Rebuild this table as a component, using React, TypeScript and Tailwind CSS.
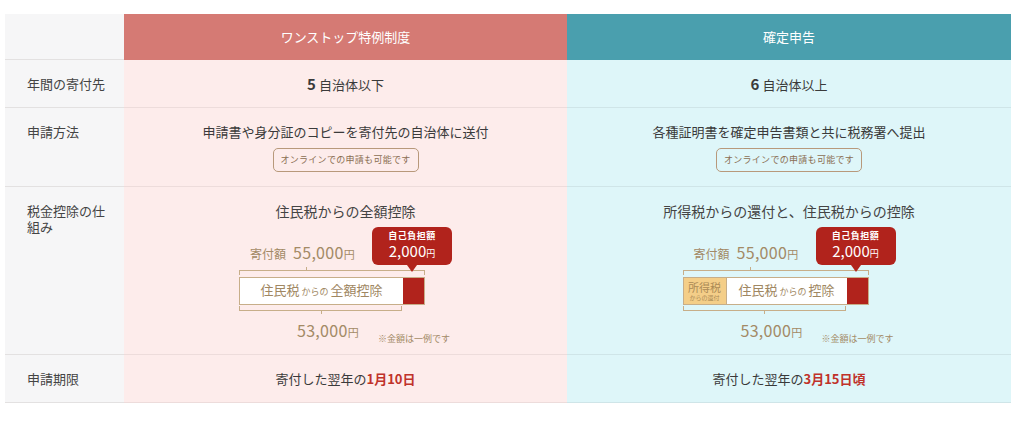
import React from "react";

const TAN = "border-[#c7ae89]";

function Chart({ blue }: { blue?: boolean }) {
  return (
    <div className="w-[213px] mt-[8px] text-[#a38a66]">
      <div className="flex items-end justify-between h-[38px]">
        <div className="pl-[11px] flex items-baseline gap-[7px] pb-[2px]">
          <span className="text-[12px] leading-[16px]">寄付額</span>
          <span className="text-[16px] leading-[18px] tracking-[0.3px]">
            55,000<span className="text-[11px]">円</span>
          </span>
        </div>
        <div className="relative z-10 w-[80px] h-[38px] bg-[#b1231c] rounded-[6px] text-white flex flex-col items-center justify-center">
          <span className="text-[9px] font-bold leading-[12px] tracking-[0.5px]">自己負担額</span>
          <span className="text-[15px] leading-[18px]">
            2,000<span className="text-[9px]">円</span>
          </span>
          <span className="absolute left-1/2 -translate-x-1/2 top-full w-0 h-0 border-l-[5px] border-r-[5px] border-t-[7px] border-l-transparent border-r-transparent border-t-[#b1231c]" />
        </div>
      </div>
      <div className={`relative mt-[5px] w-[186px] h-[5px] border-t border-l border-r ${TAN}`}>
        <span className="absolute left-[66px] bottom-full h-[4px] w-px bg-[#c7ae89]" />
      </div>
      <div className={`mt-[2px] w-[186px] h-[28px] flex border-[1.5px] ${TAN} bg-white`}>
        {blue && (
          <div className={`w-[43px] bg-[#f4ce88] border-r-[1.5px] ${TAN} flex flex-col items-center justify-center text-[#ab8a55]`}>
            <span className="text-[11px] leading-[12px]">所得税</span>
            <span className="text-[6px] leading-[9px]">からの還付</span>
          </div>
        )}
        <div className="flex-1 flex items-baseline justify-center pt-[3px] text-[#a08762]">
          <span className="text-[13px] leading-[18px]">住民税</span>
          <span className="text-[9px] mx-[2px]">からの</span>
          <span className="text-[13px] leading-[18px]">{blue ? "控除" : "全額控除"}</span>
        </div>
        <div className="w-[21px] bg-[#b1231c]" />
      </div>
      <div className={`relative mt-[1px] w-[163px] h-[5px] border-b border-l border-r ${TAN}`}>
        <span className="absolute left-1/2 top-full h-[4px] w-px bg-[#c7ae89]" />
      </div>
      <div className="flex items-end justify-between mt-[9px]">
        <span className="ml-[58px] text-[16px] leading-[20px] tracking-[0.3px]">
          53,000<span className="text-[11px]">円</span>
        </span>
        <span className="text-[9px] leading-[12px] mr-[2px] mb-[-3px]">※金額は一例です</span>
      </div>
    </div>
  );
}

function Label({ children, h }: { children: React.ReactNode; h: string }) {
  return (
    <div
      className={`${h} bg-[#f6f6f7] border-b border-[#e3e1e1] pl-[22px] pr-[16px] pt-[16px] text-[13px] leading-[16px] text-[#444]`}
    >
      {children}
    </div>
  );
}

function Pink({ children, h }: { children: React.ReactNode; h: string }) {
  return (
    <div className={`${h} bg-[#fdeceb] border-b border-[#eddcdb] flex flex-col items-center pt-[16px] text-[#3a3a3a]`}>
      {children}
    </div>
  );
}

function Blue({ children, h }: { children: React.ReactNode; h: string }) {
  return (
    <div className={`${h} bg-[#def6f9] border-b border-[#cfe5e8] flex flex-col items-center pt-[16px] text-[#3a3a3a]`}>
      {children}
    </div>
  );
}

function Badge() {
  return (
    <div className="mt-[8px] w-[146px] h-[24px] border border-[#b8997b] rounded-[5px] flex items-center justify-center text-[9px] text-[#8a6e52] tracking-[0.3px]">
      オンラインでの申請も可能です
    </div>
  );
}

export default function App() {
  return (
    <div className="w-[1024px] h-[423px] bg-white pt-[14px] pl-[5px] font-['Noto_Sans_CJK_JP','Noto_Sans',sans-serif]">
      <div className="grid grid-cols-[119px_443px_444px]">
        <div className="h-[46px] bg-[#f6f6f7] border-b border-[#e3e1e1]" />
        <div className="h-[46px] bg-[#d57a74] flex items-center justify-center text-white text-[13px]">
          ワンストップ特例制度
        </div>
        <div className="h-[46px] bg-[#4a9fae] flex items-center justify-center text-white text-[13px]">
          確定申告
        </div>

        <Label h="h-[48px]">年間の寄付先</Label>
        <Pink h="h-[48px]">
          <div className="flex items-baseline gap-[3px] leading-[16px]">
            <span className="text-[15px] font-bold">5</span>
            <span className="text-[13px]">自治体以下</span>
          </div>
        </Pink>
        <Blue h="h-[48px]">
          <div className="flex items-baseline gap-[3px] leading-[16px]">
            <span className="text-[15px] font-bold">6</span>
            <span className="text-[13px]">自治体以上</span>
          </div>
        </Blue>

        <Label h="h-[79px]">申請方法</Label>
        <Pink h="h-[79px]">
          <div className="text-[13px] leading-[16px]">申請書や身分証のコピーを寄付先の自治体に送付</div>
          <Badge />
        </Pink>
        <Blue h="h-[79px]">
          <div className="text-[13px] leading-[16px]">各種証明書を確定申告書類と共に税務署へ提出</div>
          <Badge />
        </Blue>

        <Label h="h-[168px]">税金控除の仕組み</Label>
        <Pink h="h-[168px]">
          <div className="text-[14px] leading-[16px] text-[#444]">住民税からの全額控除</div>
          <Chart />
        </Pink>
        <Blue h="h-[168px]">
          <div className="text-[14px] leading-[16px] text-[#444]">所得税からの還付と、住民税からの控除</div>
          <Chart blue />
        </Blue>

        <Label h="h-[48px]">申請期限</Label>
        <Pink h="h-[48px]">
          <div className="text-[13px] leading-[16px]">
            寄付した翌年の<span className="font-bold text-[#c0322a]">1月10日</span>
          </div>
        </Pink>
        <Blue h="h-[48px]">
          <div className="text-[13px] leading-[16px]">
            寄付した翌年の<span className="font-bold text-[#c0322a]">3月15日頃</span>
          </div>
        </Blue>
      </div>
    </div>
  );
}
